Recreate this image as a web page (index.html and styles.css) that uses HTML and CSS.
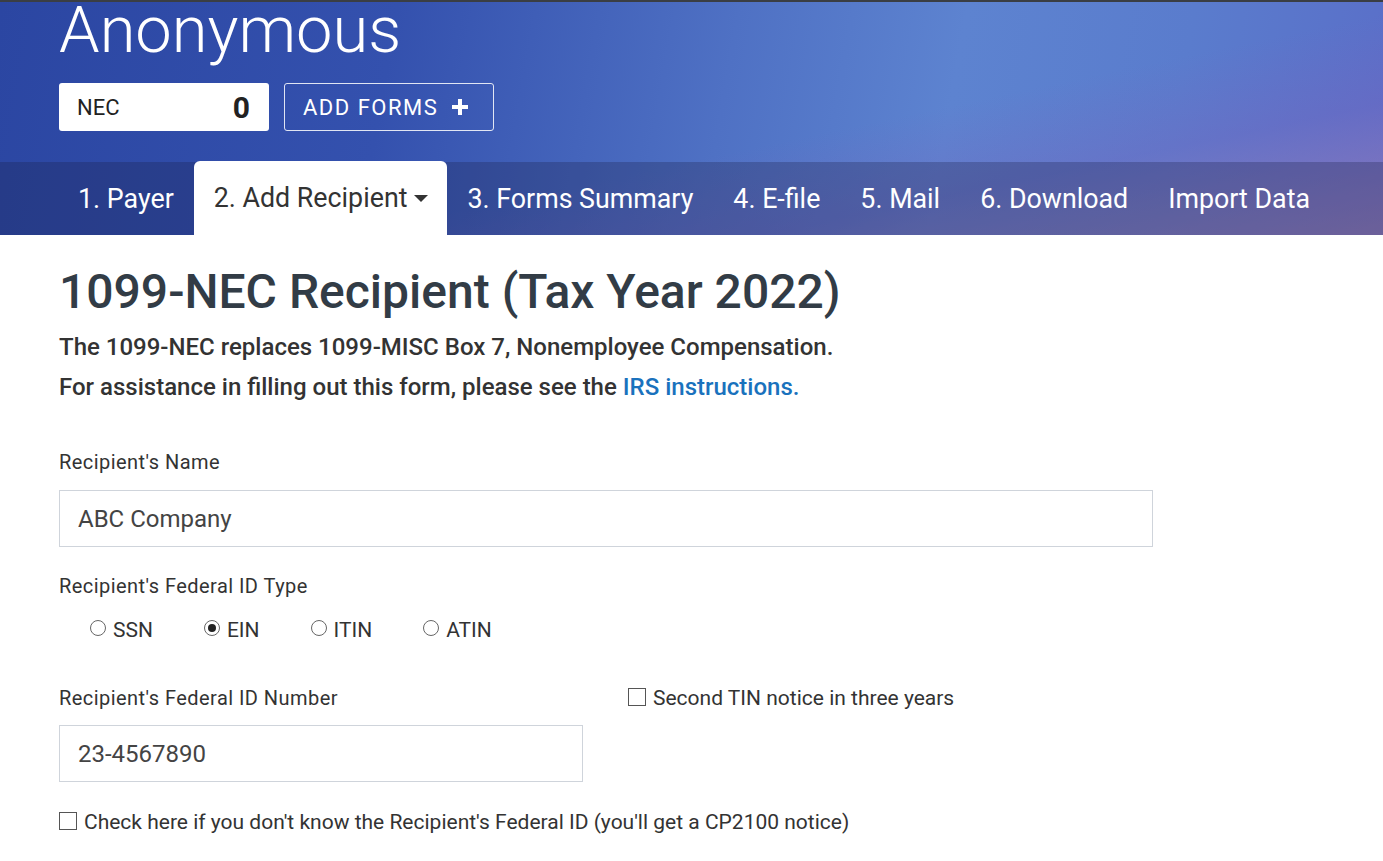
FILE: index.html
```html
<!DOCTYPE html>
<html>

<head>
    <title>1099-NEC Recipient</title>
    <link rel="stylesheet" href="styles.css">
</head>

<body>
    <header class="hero">
        <div class="brand">
            <h1 class="brand-name">Anonymous</h1>
            <div class="brand-actions">
                <div class="form-count">
                    <span>NEC</span>
                    <span class="count">0</span>
                </div>
                <button class="add-forms">
                    ADD FORMS
                    <svg class="plus" width="16" height="16" viewBox="0 0 16 16">
                        <path d="M6 0h4v6h6v4h-6v6h-4v-6h-6v-4h6z" fill="#fff"></path>
                    </svg>
                </button>
            </div>
        </div>
        <nav class="steps">
            <a class="step">1. Payer</a>
            <a class="step active">2. Add Recipient <span class="caret"></span></a>
            <a class="step">3. Forms Summary</a>
            <a class="step">4. E-file</a>
            <a class="step">5. Mail</a>
            <a class="step">6. Download</a>
            <a class="step">Import Data</a>
        </nav>
    </header>

    <main class="content">
        <h2 class="page-title">1099-NEC Recipient (Tax Year 2022)</h2>
        <p class="intro">
            The 1099-NEC replaces 1099-MISC Box 7, Nonemployee Compensation.<br>
            For assistance in filling out this form, please see the <a href="#">IRS instructions.</a>
        </p>

        <label class="field-label" for="name">Recipient's Name</label>
        <input class="text-input" id="name" type="text" value="ABC Company">

        <div class="field-label id-type">Recipient's Federal ID Type</div>
        <div class="radio-row">
            <label class="radio"><input type="radio" name="idtype"> SSN</label>
            <label class="radio"><input type="radio" name="idtype" checked> EIN</label>
            <label class="radio"><input type="radio" name="idtype"> ITIN</label>
            <label class="radio"><input type="radio" name="idtype"> ATIN</label>
        </div>

        <div class="id-row">
            <div class="id-col">
                <label class="field-label" for="tin">Recipient's Federal ID Number</label>
                <input class="text-input" id="tin" type="text" value="23-4567890">
            </div>
            <label class="check second-tin"><input type="checkbox"> Second TIN notice in three years</label>
        </div>

        <label class="check unknown-id"><input type="checkbox"> Check here if you don't know the Recipient's Federal ID (you'll get a CP2100 notice)</label>
    </main>
</body>

</html>
```

FILE: styles.css
```css
body {
    margin: 0;
    font-family: Roboto, "Liberation Sans", sans-serif;
    color: #333;
    background-color: #fff;
}

.hero {
    border-top: 2px solid #3a3e44;
    background:
        linear-gradient(168deg, rgba(255, 255, 255, 0) 58%, rgba(120, 100, 190, 0.35) 75%, rgba(190, 135, 175, 0.5) 100%),
        linear-gradient(100deg, #2b46a2 0%, #3451ae 28%, #4f71c4 52%, #5d83d0 68%, #5a7ccd 84%, #5a6ec8 100%);
}

.brand {
    padding-left: 59px;
}

.brand-name {
    margin: 0;
    font-size: 65px;
    line-height: 56px;
    font-weight: 300;
    color: #fff;
}

.brand-actions {
    display: flex;
    gap: 15px;
    margin-top: 25px;
}

.form-count {
    width: 210px;
    height: 48px;
    box-sizing: border-box;
    padding: 0 19px 0 18px;
    display: flex;
    align-items: center;
    justify-content: space-between;
    background-color: #fff;
    border-radius: 3px;
    font-size: 22px;
    color: #222;
}

.form-count .count {
    font-size: 30px;
    font-weight: 700;
}

.add-forms {
    width: 210px;
    height: 48px;
    box-sizing: border-box;
    padding: 0 0 0 18px;
    display: flex;
    align-items: center;
    gap: 14px;
    background: transparent;
    border: 1px solid rgba(255, 255, 255, 0.85);
    border-radius: 3px;
    font-family: Roboto, sans-serif;
    font-size: 22px;
    letter-spacing: 1.5px;
    color: #fff;
    cursor: pointer;
}

.steps {
    display: flex;
    height: 73px;
    margin-top: 31px;
    padding-left: 58px;
    background-color: rgba(25, 30, 70, 0.28);
}

.step {
    display: flex;
    align-items: center;
    padding: 0 20px;
    font-size: 26.8px;
    color: #fff;
    cursor: pointer;
}

.step.active {
    margin-top: -1px;
    padding-right: 19px;
    background-color: #fff;
    color: #333;
    border-radius: 6px 6px 0 0;
}

.caret {
    display: inline-block;
    margin-left: 7px;
    border-left: 7px solid transparent;
    border-right: 7px solid transparent;
    border-top: 7px solid #333;
}

.content {
    padding: 0 59px;
}

.page-title {
    margin: 29px 0 0;
    font-size: 48px;
    line-height: 56px;
    font-weight: 500;
    color: #323c46;
}

.intro {
    margin: 7px 0 0;
    font-size: 24px;
    line-height: 40px;
    font-weight: 500;
    color: #333;
}

.intro a {
    color: #1a72bd;
    text-decoration: none;
}

.field-label {
    display: block;
    margin-top: 43px;
    font-size: 20px;
    line-height: 24px;
    letter-spacing: 0.45px;
    color: #333;
}

.field-label.id-type {
    margin-top: 27px;
}

.text-input {
    display: block;
    width: 1094px;
    height: 57px;
    box-sizing: border-box;
    margin-top: 16px;
    padding: 0 18px;
    border: 1px solid #cfd4db;
    font-family: Roboto, sans-serif;
    font-size: 24px;
    color: #444;
}

.radio-row {
    display: flex;
    gap: 51px;
    margin-top: 20px;
    padding-left: 31px;
}

.radio {
    display: flex;
    align-items: center;
    gap: 7px;
    font-size: 21px;
    line-height: 24px;
}

.radio input {
    appearance: none;
    width: 16px;
    height: 16px;
    margin: 0 0 4px;
    border: 1px solid #666;
    border-radius: 50%;
    background-color: #fff;
    display: flex;
    align-items: center;
    justify-content: center;
}

.radio input:checked::after {
    content: "";
    width: 8px;
    height: 8px;
    border-radius: 50%;
    background-color: #222;
}

.id-row {
    display: flex;
    gap: 45px;
    margin-top: 44px;
}

.id-row .field-label {
    margin-top: 0;
}

.id-row .text-input {
    width: 524px;
    margin-top: 15px;
}

.check {
    display: flex;
    align-items: center;
    gap: 7px;
    font-size: 21px;
    line-height: 24px;
    color: #333;
}

.check input {
    appearance: none;
    width: 18px;
    height: 18px;
    margin: 0 0 3px;
    border: 1px solid #555;
    background-color: #fff;
}

.second-tin {
    align-self: flex-start;
}

.unknown-id {
    margin-top: 28px;
}
```
